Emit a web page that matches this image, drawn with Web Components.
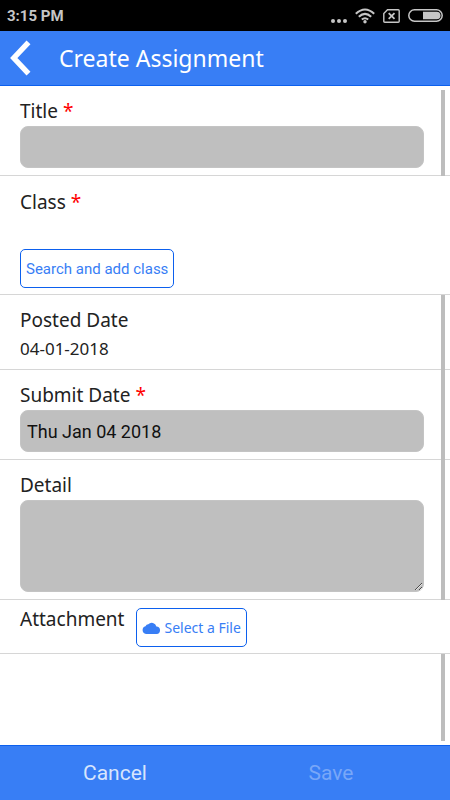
<!DOCTYPE html>
<html lang="en">
<head>
<meta charset="UTF-8">
<meta name="viewport" content="width=device-width, initial-scale=1">
<title>Create Assignment</title>
<style>
  body {
    margin: 0;
    background: #fff;
    color: #222;
    font-family: "Noto Sans", "Open Sans", sans-serif;
  }
</style>
</head>
<body>
<assignment-app></assignment-app>

<script>
// Phone status bar: the clock comes in through the slot
class StatusBar extends HTMLElement {
  constructor() {
    super();
    this.attachShadow({ mode: "open" });
    this.shadowRoot.innerHTML = `
  <style>
    :host {
      display: flex;
      align-items: center;
      justify-content: space-between;
      height: 31px;
      padding: 0 7px;
      background: #000;
      color: #c6c6c6;
      font: bold 15px Roboto, sans-serif;
      box-sizing: border-box;
    }
    .icons {
      display: flex;
      align-items: center;
      gap: 8px;
    }
    svg { display: block; }
  </style>
  <slot></slot>
  <div class="icons">
    <svg width="17" height="16" fill="#c6c6c6">
      <circle cx="3" cy="13" r="2"/><circle cx="9" cy="13" r="2"/><circle cx="15" cy="13" r="2"/>
    </svg>
    <svg width="20" height="16" fill="none" stroke="#c6c6c6" stroke-width="2">
      <path d="M.8 5.8Q10-2.8 19.2 5.8"/>
      <path d="M3.8 8.8Q10 3 16.2 8.8"/>
      <path d="M6.8 11.6Q10 8.8 13.2 11.6"/>
      <circle cx="10" cy="13.8" r="1.7" fill="#c6c6c6" stroke="none"/>
    </svg>
    <svg width="17" height="14" fill="none" stroke="#c6c6c6" stroke-width="1.4">
      <path d="M4.5.8H15.2Q16.2.8 16.2 1.8V12.2Q16.2 13.2 15.2 13.2H1.8Q.8 13.2.8 12.2V4.5Z"/>
      <path d="M5.7 4.2L11.5 9.8M11.5 4.2L5.7 9.8" stroke-width="1.8"/>
    </svg>
    <svg width="35" height="13">
      <rect x=".8" y=".8" width="33.4" height="11.4" rx="5.7" fill="none" stroke="#c6c6c6" stroke-width="1.5"/>
      <path d="M15 2.7H28.7A3.8 3.8 0 0 1 28.7 10.3H15Z" fill="#c6c6c6"/>
    </svg>
  </div>
`;
  }
}
customElements.define("status-bar", StatusBar);

// Blue bar with the back button and the page title
class PageHeader extends HTMLElement {
  constructor() {
    super();
    this.attachShadow({ mode: "open" });
    this.shadowRoot.innerHTML = `
  <style>
    :host {
      display: flex;
      align-items: center;
      gap: 18px;
      height: 55px;
      padding-left: 9px;
      background: #387ef5;
      border-bottom: 1px solid #0c60ee;
      color: #fff;
      box-sizing: border-box;
    }
    button {
      padding: 0 10px 0 0;
      border: 0;
      background: none;
    }
    svg { display: block; }
    h1 {
      margin: 0;
      font-size: 23px;
      font-weight: 400;
      line-height: 32px;
    }
  </style>
  <button type="button" aria-label="Back">
    <svg width="22" height="36" fill="none" stroke="#fff" stroke-width="5.4"><path d="M19.5 2.4L4.8 18L19.5 33.6"/></svg>
  </button>
  <h1><slot></slot></h1>
`;
  }
}
customElements.define("page-header", PageHeader);

// One row of the form, "solid" rows cover the scroll indicator
class FormItem extends HTMLElement {
  constructor() {
    super();
    this.attachShadow({ mode: "open" });
    this.shadowRoot.innerHTML = `
  <style>
    :host {
      display: block;
      padding: 10px 26px 7px 20px;
      border-bottom: 1px solid #d6d6d6;
    }
    :host([solid]) {
      position: relative;
      z-index: 2;
      padding-top: 11px;
      padding-bottom: 6px;
      background: #fff;
    }
    :host([inline]) {
      display: flex;
      align-items: flex-start;
      gap: 12px;
      padding-top: 8px;
    }
  </style>
  <slot></slot>
`;
  }
}
customElements.define("form-item", FormItem);

// Outlined button with an optional icon
class OutlineButton extends HTMLElement {
  constructor() {
    super();
    this.attachShadow({ mode: "open" });
    this.shadowRoot.innerHTML = `
  <style>
    :host { display: inline-block; }
    button {
      display: flex;
      align-items: center;
      gap: 4px;
      height: 39px;
      padding: 0 5px;
      border: 1px solid #0c60ee;
      border-radius: 5px;
      background: none;
      color: #387ef5;
      font: inherit;
      box-sizing: border-box;
    }
  </style>
  <button type="button"><slot name="icon"></slot><slot></slot></button>
`;
  }
}
customElements.define("outline-button", OutlineButton);

// Cancel / Save bar at the bottom
class ActionBar extends HTMLElement {
  constructor() {
    super();
    this.attachShadow({ mode: "open" });
    this.shadowRoot.innerHTML = `
  <style>
    :host {
      display: flex;
      height: 55px;
      padding: 0 11px 0 7px;
      background: #387ef5;
      border-top: 1px solid #0c60ee;
      box-sizing: border-box;
    }
    button {
      flex: 1;
      border: 0;
      background: none;
      color: #d7e5fd;
      font: 21px Roboto, sans-serif;
    }
    button:disabled { color: #78a7f8; }
  </style>
  <button type="button">Cancel</button>
  <button type="button" disabled>Save</button>
`;
  }
}
customElements.define("action-bar", ActionBar);

class AssignmentApp extends HTMLElement {
  constructor() {
    super();
    this.attachShadow({ mode: "open" });
  }

  connectedCallback() {
    this.render();
  }

  render() {
    this.shadowRoot.innerHTML = `
  <style>
    :host {
      display: flex;
      flex-direction: column;
      min-height: 100vh;
    }
    form {
      flex: 1;
      position: relative;
    }
    .scrollbar {
      position: absolute;
      z-index: 1;
      top: 4px;
      right: 5px;
      bottom: 4px;
      width: 4px;
      background: #bdbdbd;
    }
    label, .label {
      display: block;
      font-size: 19px;
      line-height: 30px;
    }
    .required { color: #f00; }
    input, textarea {
      display: block;
      width: 100%;
      padding: 6px;
      border: 1px solid #c4c4c4;
      border-radius: 8px;
      background: #bfbfbf;
      color: #111;
      font: 18px Roboto, sans-serif;
      box-sizing: border-box;
    }
    input { height: 42px; }
    textarea { height: 92px; }
    output {
      display: block;
      font-size: 17px;
      line-height: 27px;
    }
    .search {
      margin-top: 32px;
      font: 15px Roboto, sans-serif;
    }
    .file { font-size: 14px; }
    form-item[inline] .label { line-height: 22px; }
    svg { display: block; }
  </style>
  <status-bar>3:15 PM</status-bar>
  <page-header>Create Assignment</page-header>
  <form>
    <form-item>
      <label for="title">Title <span class="required">*</span></label>
      <input id="title" type="text">
    </form-item>
    <form-item solid>
      <div class="label">Class <span class="required">*</span></div>
      <outline-button class="search">Search and add class</outline-button>
    </form-item>
    <form-item>
      <label for="posted">Posted Date</label>
      <output id="posted">04-01-2018</output>
    </form-item>
    <form-item>
      <label for="submit">Submit Date <span class="required">*</span></label>
      <input id="submit" type="text" value="Thu Jan 04 2018">
    </form-item>
    <form-item>
      <label for="detail">Detail</label>
      <textarea id="detail"></textarea>
    </form-item>
    <form-item solid inline>
      <div class="label">Attachment</div>
      <outline-button class="file">
        <svg slot="icon" width="18" height="12" fill="#387ef5"><path d="M4 12A4 4 0 0 1 3.5 4.2A3.2 3.2 0 0 1 6.3 2.3A4.8 4.8 0 0 1 14.4 4.4A3.8 3.8 0 0 1 14 12Z"/></svg>
        Select a File
      </outline-button>
    </form-item>
    <div class="scrollbar"></div>
  </form>
  <action-bar></action-bar>
`;
  }
}
customElements.define("assignment-app", AssignmentApp);
</script>
</body>
</html>
